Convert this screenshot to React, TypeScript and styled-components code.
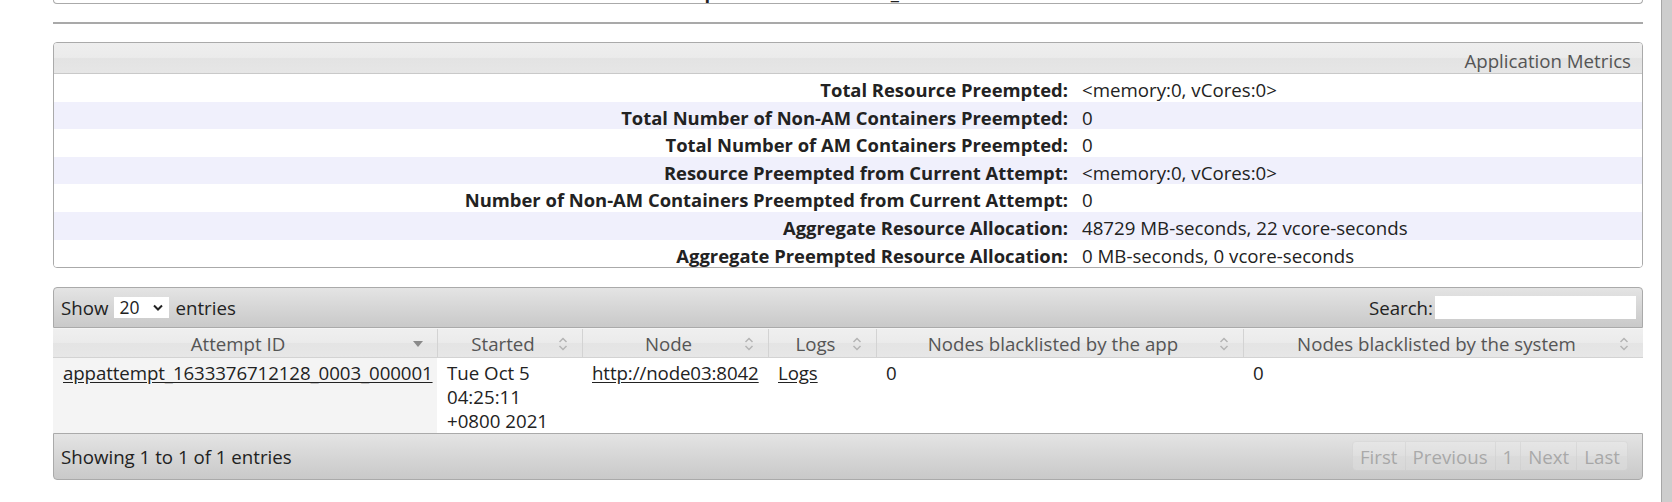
import React from "react";
import styled, { createGlobalStyle } from "styled-components";

const Global = createGlobalStyle`
  html, body { margin: 0; padding: 0; background: #ffffff; }
  body {
    font-family: "Open Sans", "Noto Sans", sans-serif;
    font-size: 18.7px;
    color: #222222;
    overflow: hidden;
  }
  * { box-sizing: border-box; }
`;

const Page = styled.div`
  display: flex;
  height: 502px;
  overflow: hidden;
`;

const Main = styled.main`
  flex: 1;
  min-width: 0;
  padding: 0 16px 0 53px;
`;

const ScrollTrack = styled.div`
  width: 13px;
  height: 502px;
  padding-left: 2px;
  background: #ffffff;
`;

const ScrollThumb = styled.div`
  height: 100%;
  background: #cdcdcd;
  border-left: 1px solid #a6a6a6;
`;

/* --- clipped overview box at top --- */
const OverviewTail = styled.div`
  height: 4px;
  overflow: hidden;
  border: 1px solid #aaaaaa;
  border-top: none;
  border-radius: 0 0 4px 4px;
`;

const OverviewRow = styled.div`
  display: grid;
  grid-template-columns: 736px 1fr;
  margin-top: -18px;
  line-height: 20px;
`;

const OverviewLabel = styled.div`
  text-align: right;
  font-weight: 700;
  font-size: 18.4px;
  padding-right: 2px;
  white-space: nowrap;
`;

const OverviewValue = styled.div`
  padding-left: 11px;
  white-space: nowrap;
`;

const Rule = styled.div`
  height: 2px;
  margin-top: 18px;
  background: #a9a9a9;
`;

/* --- metrics box --- */
const MetricsBox = styled.section`
  margin-top: 18px;
  border: 1px solid #aaaaaa;
  border-radius: 4px;
  overflow: hidden;
`;

const MetricsHeader = styled.div`
  height: 31px;
  padding: 4px 11px 0 0;
  border-bottom: 1px solid #c9c9c9;
  background: linear-gradient(to bottom, #eeeeee 0%, #ebebeb 48%, #e3e3e3 52%, #e6e6e6 100%);
  color: #555555;
  display: flex;
  align-items: center;
  justify-content: flex-end;
`;

const MetricsRow = styled.div<{ $alt: boolean }>`
  display: grid;
  grid-template-columns: 1019px 1fr;
  height: 27.6px;
  padding-top: 3px;
  align-items: center;
  background: ${(p) => (p.$alt ? "#f0f0fc" : "#ffffff")};
  white-space: nowrap;
`;

const MetricsLabel = styled.div`
  text-align: right;
  font-weight: 700;
  font-size: 18.4px;
  padding-right: 5px;
`;

const MetricsValue = styled.div`
  padding-left: 9px;
  color: #222222;
`;

/* --- data table --- */
const TableWrap = styled.section`
  margin-top: 19px;
`;

const Toolbar = styled.div`
  height: 41px;
  border: 1px solid #aaaaaa;
  border-radius: 4px 4px 0 0;
  background: linear-gradient(to bottom, #e4e4e4 0%, #d6d6d6 50%, #c9c9c9 100%);
  display: flex;
  align-items: center;
  justify-content: space-between;
  padding: 0 6px 1px 7px;
`;

const LengthGroup = styled.label`
  display: flex;
  align-items: center;
  gap: 6px;
`;

const SelectBox = styled.span`
  width: 55px;
  height: 21px;
  background: #ffffff;
  display: inline-flex;
  align-items: center;
  justify-content: space-between;
  padding: 0 6px 0 5px;
  font-size: 17.5px;
  line-height: 21px;
`;

const SearchGroup = styled.label`
  display: flex;
  align-items: center;
  gap: 2px;
`;

const SearchInput = styled.input`
  width: 201px;
  height: 23px;
  border: none;
  outline: none;
  background: #ffffff;
  padding: 0 4px;
  font: inherit;
`;

const GridRow = styled.div`
  display: grid;
  grid-template-columns: 384px 145px 186px 108px 367px 1fr;
`;

const HeadRow = styled(GridRow)`
  height: 30px;
  border-top: 1px solid #f4f4f4;
  border-bottom: 1px solid #d3d3d3;
  background: linear-gradient(to bottom, #efefef 0%, #ebebeb 48%, #e4e4e4 52%, #e7e7e7 100%);
`;

const HeadCell = styled.div<{ $first?: boolean }>`
  display: grid;
  grid-template-columns: 1fr 10px;
  align-items: center;
  padding: 1px 14px 0 10px;
  color: #555555;
  white-space: nowrap;
  border-left: ${(p) => (p.$first ? "none" : "1px solid #d3d3d3")};
  text-align: center;
`;

const BodyRow = styled(GridRow)`
  height: 75px;
`;

const BodyCell = styled.div<{ $sorted?: boolean }>`
  padding: 3px 10px 0 10px;
  line-height: 24px;
  background: ${(p) => (p.$sorted ? "#f4f4f4" : "#ffffff")};
  color: #222222;
`;

const CellLink = styled.a`
  color: #222222;
  text-decoration: underline;
  text-underline-offset: 2px;
  letter-spacing: -0.1px;
  white-space: nowrap;
`;

const Footer = styled.div`
  height: 47px;
  border: 1px solid #aaaaaa;
  border-radius: 0 0 4px 4px;
  background: linear-gradient(to bottom, #e4e4e4 0%, #d6d6d6 50%, #c9c9c9 100%);
  display: flex;
  align-items: center;
  justify-content: space-between;
  padding: 0 14px 1px 7px;
`;

const Pager = styled.div`
  display: flex;
  height: 30px;
  opacity: 0.35;
`;

const PageButton = styled.span<{ $first?: boolean; $last?: boolean }>`
  display: flex;
  align-items: center;
  padding: 0 7px;
  color: #555555;
  background: linear-gradient(to bottom, #f4f4f4 0%, #efefef 50%, #e6e6e6 52%, #e9e9e9 100%);
  border: 1px solid #d3d3d3;
  border-left-width: ${(p) => (p.$first ? "1px" : "0")};
  border-radius: ${(p) => (p.$first ? "4px 0 0 4px" : p.$last ? "0 4px 4px 0" : "0")};
`;

const SortDown = () => (
  <svg width="10" height="6" viewBox="0 0 10 6">
    <polygon points="0,0 10,0 5,6" fill="#8a8a8a" />
  </svg>
);

const SortBoth = () => (
  <svg width="10" height="14" viewBox="0 0 10 14">
    <polyline points="1.5,5 5,1.5 8.5,5" fill="none" stroke="#b4b4b4" strokeWidth="1.5" />
    <polyline points="1.5,9 5,12.5 8.5,9" fill="none" stroke="#b4b4b4" strokeWidth="1.5" />
  </svg>
);

const Chevron = () => (
  <svg width="10" height="7" viewBox="0 0 10 7">
    <polyline points="1,1.5 5,5.5 9,1.5" fill="none" stroke="#222222" strokeWidth="2" />
  </svg>
);

const metrics: [string, string][] = [
  ["Total Resource Preempted:", "<memory:0, vCores:0>"],
  ["Total Number of Non-AM Containers Preempted:", "0"],
  ["Total Number of AM Containers Preempted:", "0"],
  ["Resource Preempted from Current Attempt:", "<memory:0, vCores:0>"],
  ["Number of Non-AM Containers Preempted from Current Attempt:", "0"],
  ["Aggregate Resource Allocation:", "48729 MB-seconds, 22 vcore-seconds"],
  ["Aggregate Preempted Resource Allocation:", "0 MB-seconds, 0 vcore-seconds"],
];

const columns: { title: string; sorted?: boolean }[] = [
  { title: "Attempt ID", sorted: true },
  { title: "Started" },
  { title: "Node" },
  { title: "Logs" },
  { title: "Nodes blacklisted by the app" },
  { title: "Nodes blacklisted by the system" },
];

export default function App() {
  return (
    <>
      <Global />
      <Page>
        <Main>
          <OverviewTail>
            <OverviewRow>
              <OverviewLabel>AM container Node Label expression:</OverviewLabel>
              <OverviewValue>&lt;DEFAULT_PARTITION&gt;</OverviewValue>
            </OverviewRow>
          </OverviewTail>
          <Rule />
          <MetricsBox>
            <MetricsHeader>Application Metrics</MetricsHeader>
            {metrics.map(([k, v], i) => (
              <MetricsRow key={k} $alt={i % 2 === 1}>
                <MetricsLabel>{k}</MetricsLabel>
                <MetricsValue>{v}</MetricsValue>
              </MetricsRow>
            ))}
          </MetricsBox>
          <TableWrap>
            <Toolbar>
              <LengthGroup>
                Show
                <SelectBox>
                  20
                  <Chevron />
                </SelectBox>
                entries
              </LengthGroup>
              <SearchGroup>
                Search:
                <SearchInput type="text" />
              </SearchGroup>
            </Toolbar>
            <HeadRow>
              {columns.map((c, i) => (
                <HeadCell key={c.title} $first={i === 0}>
                  <span>{c.title}</span>
                  {c.sorted ? <SortDown /> : <SortBoth />}
                </HeadCell>
              ))}
            </HeadRow>
            <BodyRow>
              <BodyCell $sorted>
                <CellLink href="#">appattempt_1633376712128_0003_000001</CellLink>
              </BodyCell>
              <BodyCell>
                Tue Oct 5
                <br />
                04:25:11
                <br />
                +0800 2021
              </BodyCell>
              <BodyCell>
                <CellLink href="#">http://node03:8042</CellLink>
              </BodyCell>
              <BodyCell>
                <CellLink href="#">Logs</CellLink>
              </BodyCell>
              <BodyCell>0</BodyCell>
              <BodyCell>0</BodyCell>
            </BodyRow>
            <Footer>
              <span>Showing 1 to 1 of 1 entries</span>
              <Pager>
                <PageButton $first>First</PageButton>
                <PageButton>Previous</PageButton>
                <PageButton>1</PageButton>
                <PageButton>Next</PageButton>
                <PageButton $last>Last</PageButton>
              </Pager>
            </Footer>
          </TableWrap>
        </Main>
        <ScrollTrack>
          <ScrollThumb />
        </ScrollTrack>
      </Page>
    </>
  );
}
